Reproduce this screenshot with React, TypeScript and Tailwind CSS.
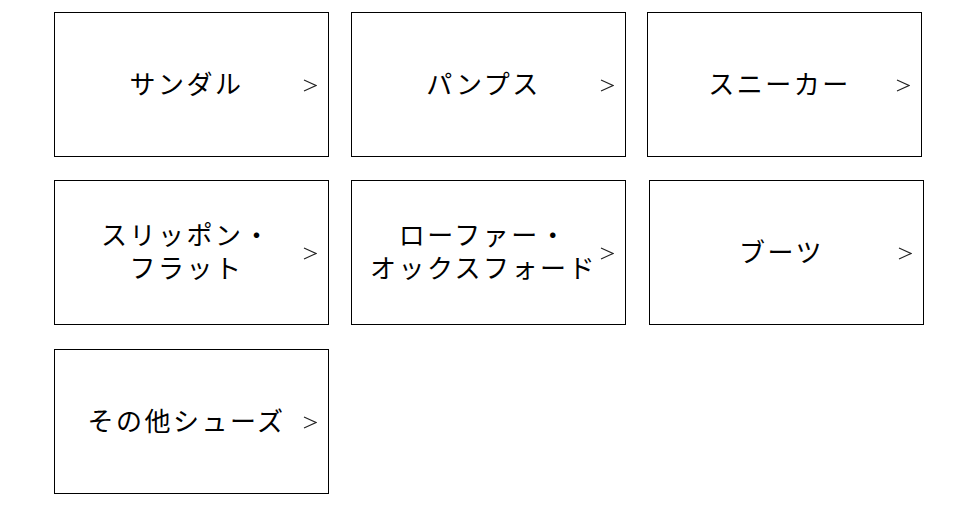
const rows: { label: string[]; extra?: string }[][] = [
  [{ label: ["サンダル"] }, { label: ["パンプス"] }, { label: ["スニーカー"], extra: "ml-[-1px]" }],
  [
    { label: ["スリッポン・", "フラット"] },
    { label: ["ローファー・", "オックスフォード"] },
    { label: ["ブーツ"], extra: "ml-[1px]" },
  ],
  [{ label: ["その他シューズ"] }],
];

function Chevron() {
  return (
    <svg
      className="absolute right-[11px] top-[66px]"
      width="14"
      height="13"
      viewBox="0 0 14 13"
      fill="none"
      stroke="#222"
      strokeWidth="1.1"
    >
      <polyline points="1,1 13,6.5 1,12" />
    </svg>
  );
}

function CategoryCard({ label, extra }: { label: string[]; extra?: string }) {
  return (
    <a
      href="#"
      className={`relative flex h-[145px] w-[275px] items-center justify-center border border-black pb-[5px] pr-[10px] text-black ${extra ?? ""}`}
    >
      <span className="text-center text-[26px] font-normal leading-[33px] tracking-[2.5px]">
        {label.map((line) => (
          <span key={line} className="block">
            {line}
          </span>
        ))}
      </span>
      <Chevron />
    </a>
  );
}

export default function App() {
  return (
    <div className="flex min-h-[505px] w-[980px] flex-col gap-y-[23px] bg-white pl-[54px] pt-[12px] font-['Noto_Sans_CJK_JP','Noto_Sans',sans-serif]">
      {rows.map((row, i) => (
        <div key={i} className={`flex gap-x-[22px] ${i === 2 ? "mt-[1px]" : ""}`}>
          {row.map((item) => (
            <CategoryCard key={item.label.join("")} label={item.label} extra={item.extra} />
          ))}
        </div>
      ))}
    </div>
  );
}
